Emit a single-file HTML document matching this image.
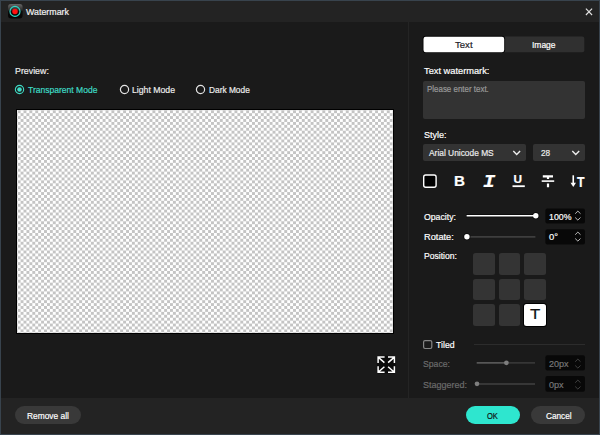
<!DOCTYPE html>
<html><head><meta charset="utf-8"><title>Watermark</title>
<style>
*{box-sizing:border-box;margin:0;padding:0}
html,body{width:600px;height:435px;overflow:hidden;background:#1a1a1a}
body{font-family:"Liberation Sans",sans-serif;font-size:10px;color:#ececec;position:relative}
.a{position:absolute}
.t{position:absolute;white-space:nowrap;line-height:12px;height:12px;transform-origin:0 0;-webkit-text-stroke:0.2px currentColor}
#win{left:0;top:0;width:600px;height:435px;border:1px solid #38434d;background:#1a1a1a}
#title{left:1px;top:1px;width:598px;height:21px;background:#232323}
#foot{left:1px;top:398px;width:598px;height:36px;background:#232323}
#vdiv{left:408px;top:22px;width:1px;height:376px;background:#242424}
.btn{position:absolute;top:406.3px;height:18.2px;border-radius:9.1px;background:#393939}
.box{position:absolute;background:#333;border-radius:2px}
.vb{position:absolute;background:#0b0b0b;border-radius:2px;left:545.5px;width:39.5px;height:15px}
.cell{position:absolute;width:21.7px;height:21.7px;background:#343434;border-radius:2.5px}
</style></head><body>
<div id="win" class="a"></div>
<div id="title" class="a"></div>
<div id="foot" class="a"></div>
<div id="vdiv" class="a"></div>

<!-- title icon + close -->
<svg class="a" style="left:8px;top:4px" width="15" height="15" viewBox="0 0 15 15">
<defs><linearGradient id="g" x1="0" y1="0" x2="0" y2="1"><stop offset="0" stop-color="#686868"/><stop offset="0.42" stop-color="#2c2c2c"/><stop offset="0.5" stop-color="#0c0c0c"/><stop offset="1" stop-color="#050505"/></linearGradient></defs>
<rect x="0" y="0" width="14.6" height="14.4" rx="3" fill="url(#g)"/>
<circle cx="7" cy="7.4" r="5" fill="none" stroke="#2fd9c8" stroke-width="1.15"/>
<circle cx="7" cy="7.4" r="2.75" fill="#ff1010"/>
</svg>
<svg class="a" style="left:585px;top:7.6px" width="8" height="8" viewBox="0 0 8 8"><path d="M0.9 0.6L7.1 7M7.1 0.6L0.9 7" stroke="#e4e4e4" stroke-width="1.1" fill="none"/></svg>

<!-- radios -->
<svg class="a" style="left:13.85px;top:84.2px" width="11" height="11" viewBox="0 0 11 11"><circle cx="5.5" cy="5.5" r="4.15" fill="none" stroke="#3fdcc6" stroke-width="1.1"/><circle cx="5.5" cy="5.5" r="2.3" fill="#3fdcc6"/></svg>
<svg class="a" style="left:118.6px;top:84.25px" width="11" height="11" viewBox="0 0 11 11"><circle cx="5.5" cy="5.5" r="4.1" fill="none" stroke="#e4e4e4" stroke-width="1.2"/></svg>
<svg class="a" style="left:195.4px;top:84.25px" width="11" height="11" viewBox="0 0 11 11"><circle cx="5.5" cy="5.5" r="4.1" fill="none" stroke="#e4e4e4" stroke-width="1.2"/></svg>

<!-- preview -->
<div class="a" style="left:16px;top:109px;width:378px;height:224.6px;background:#000"></div>
<div class="a" style="left:17px;top:110px;width:376px;height:222.6px;background:#fff repeating-conic-gradient(#c4c4c4 0 25%,#ffffff 0 50%) 0.67px 3.2px/5.871px 5.852px"></div>

<svg class="a" style="left:374px;top:353px" width="24" height="23" viewBox="374 353 24 23" fill="none" stroke="#fff" stroke-width="1.5">
<rect x="376.8" y="355.8" width="18.8" height="17.6" rx="1.5" fill="#000" fill-opacity="0.55" stroke="none"/>
<path d="M378.1 363V357.1H384.6M378.1 357.1L384.4 362.6M388 357.1H394.4V363M394.4 357.1L388.1 362.6M378.1 366.3V372.2H384.6M378.1 372.2L384.4 366.7M394.4 366.3V372.2H388M394.4 372.2L388.1 366.7"/></svg>

<div class="btn" style="left:15px;width:66.3px"></div>
<div class="btn" style="left:465.5px;width:54.5px;background:#2ee6cf"></div>
<div class="btn" style="left:531.3px;width:53.7px"></div>

<!-- right panel -->
<svg class="a" style="left:420px;top:33px" width="170" height="24" viewBox="420 33 170 24"><rect x="423" y="36.4" width="161.3" height="15.9" rx="2" fill="#303030"/><rect x="422.6" y="35.8" width="82.5" height="17.3" rx="3" fill="#050505"/><rect x="423.5" y="36.7" width="80.7" height="15.6" rx="2.2" fill="#fff"/></svg>
<div class="box" style="left:423px;top:81px;width:162px;height:38px"></div>
<div class="box" style="left:423px;top:144.3px;width:102.9px;height:17px"></div>
<svg class="a" style="left:512px;top:149px" width="10" height="8" viewBox="512 149 10 8"><path d="M513.3 151L516.7 154.4L520.1 151" stroke="#eee" stroke-width="1.4" fill="none"/></svg>
<div class="box" style="left:533.3px;top:144.3px;width:51.7px;height:17px"></div>
<svg class="a" style="left:571px;top:149px" width="10" height="8" viewBox="571 149 10 8"><path d="M572.3 151L575.75 154.4L579.2 151" stroke="#eee" stroke-width="1.4" fill="none"/></svg>

<!-- style icons -->
<svg class="a" style="left:420px;top:172px" width="170" height="20" viewBox="420 172 170 20" fill="none" stroke="#fff">
<rect x="423.7" y="175" width="12.4" height="12.2" rx="2" stroke-width="1.4" fill="#000"/>
<path d="M512.5 186.2H524.8" stroke-width="1.8"/>
<path d="M542.8 176.4H553M548 176.4V179M548 183.5V187.3" stroke-width="2.2"/>
<path d="M541.7 181.1H554.2" stroke-width="1.6"/>
<path d="M573.25 175.3V185" stroke-width="1.6"/><path d="M570.5 182.8H576L573.25 186.9Z" fill="#fff" stroke="none"/>
</svg>
<div class="t" style="left:453.9px;top:172.5px;font-size:15.2px;font-weight:bold;color:#fff;line-height:16px;height:16px">B</div>
<div class="t" style="left:483.2px;top:175.3px;font-size:18.6px;font-weight:bold;font-style:italic;color:#fff;line-height:16px;height:16px;font-family:'Liberation Mono',monospace;transform:scaleX(1.1)">I</div>
<div class="t" style="left:513.6px;top:172.1px;font-size:11.8px;font-weight:bold;color:#fff;line-height:14px;height:14px">U</div>
<div class="t" style="left:577px;top:172.8px;font-size:15.4px;font-weight:bold;color:#fff;line-height:18px;height:18px;transform:scaleX(0.8)">T</div>

<svg class="a" style="left:540px;top:200px" width="50" height="200" viewBox="540 200 50 200"><g fill="#080808">
<rect x="545.4" y="208.4" width="39.6" height="15" rx="2"/><rect x="545.4" y="229.3" width="39.6" height="15.1" rx="2"/>
<rect x="545.4" y="355.3" width="39.6" height="15.3" rx="2"/><rect x="545.4" y="376" width="39.6" height="15.7" rx="2"/></g></svg>
<svg class="a" style="left:460px;top:205px" width="82" height="190" viewBox="460 205 82 190" fill="none">
<path d="M466 215.75H536" stroke="#0a0a0a" stroke-width="3.2"/><circle cx="535.8" cy="215.8" r="3.5" fill="#0a0a0a"/><path d="M466.6 215.75H536" stroke="#fff" stroke-width="1.7"/><circle cx="535.8" cy="215.8" r="2.7" fill="#fff"/>
<path d="M467 236.8H535.4" stroke="#3e3e3e" stroke-width="1.7"/><circle cx="466.9" cy="236.7" r="3.5" fill="#0a0a0a"/><circle cx="466.9" cy="236.7" r="2.7" fill="#fff"/>
<path d="M476.7 362.9H506.4" stroke="#6c6c6c" stroke-width="1.3"/><path d="M506.4 362.9H535" stroke="#404040" stroke-width="1.3"/><circle cx="506.4" cy="362.8" r="2.35" fill="#7e7e7e"/>
<path d="M476.7 384H535" stroke="#424242" stroke-width="1.4"/><circle cx="477" cy="383.8" r="2.35" fill="#7e7e7e"/>
</svg>
<!-- opacity -->
<svg class="a" style="left:574.4px;top:210.4px" width="8" height="11" viewBox="0 0 8 11"><path d="M1.2 3.7L3.85 1.1L6.5 3.7M1.2 7.5L3.85 10.1L6.5 7.5" stroke="#d0d0d0" stroke-width="0.9" fill="none"/></svg>

<!-- rotate -->
<svg class="a" style="left:574.4px;top:231.3px" width="8" height="11" viewBox="0 0 8 11"><path d="M1.2 3.7L3.85 1.1L6.5 3.7M1.2 7.5L3.85 10.1L6.5 7.5" stroke="#d0d0d0" stroke-width="0.9" fill="none"/></svg>

<!-- position grid -->
<div class="cell" style="left:473.3px;top:253.3px"></div><div class="cell" style="left:498.65px;top:253.3px"></div><div class="cell" style="left:524px;top:253.3px"></div>
<div class="cell" style="left:473.3px;top:278.65px"></div><div class="cell" style="left:498.65px;top:278.65px"></div><div class="cell" style="left:524px;top:278.65px"></div>
<div class="cell" style="left:473.3px;top:304px"></div><div class="cell" style="left:498.65px;top:304px"></div>
<div class="cell" style="left:524px;top:304px;background:#fff;box-shadow:0 0 0 1px #000"></div>
<div class="t" style="left:529.6px;top:306.3px;color:#111;font-size:14px;line-height:16px;height:16px;transform:scaleX(1.2)">T</div>

<!-- tiled -->
<svg class="a" style="left:421px;top:338px" width="14" height="14" viewBox="421 338 14 14"><rect x="423.6" y="340.6" width="8.2" height="7.9" rx="1.4" fill="none" stroke="#858585" stroke-width="1.2"/></svg>
<div class="a" style="left:474px;top:344px;width:111px;height:1px;background:#2c2c2c"></div>

<svg class="a" style="left:574.4px;top:357.6px" width="8" height="11" viewBox="0 0 8 11"><path d="M1.2 3.7L3.85 1.1L6.5 3.7M1.2 7.5L3.85 10.1L6.5 7.5" stroke="#484848" stroke-width="0.9" fill="none"/></svg>

<svg class="a" style="left:574.4px;top:378.6px" width="8" height="11" viewBox="0 0 8 11"><path d="M1.2 3.7L3.85 1.1L6.5 3.7M1.2 7.5L3.85 10.1L6.5 7.5" stroke="#484848" stroke-width="0.9" fill="none"/></svg>

<div class="t" style="left:25.70px;top:5.61px;color:#f2f2f2;font-size:9.8px;transform:translateY(0.00px) scaleX(0.903)">Watermark</div>
<div class="t" style="left:15.20px;top:64.61px;color:#ececec;font-size:9.8px;transform:translateY(0.00px) scaleX(0.901)">Preview:</div>
<div class="t" style="left:28.40px;top:83.61px;color:#3fdcc6;font-size:9.8px;transform:translateY(0.30px) scaleX(0.872)">Transparent Mode</div>
<div class="t" style="left:132.00px;top:83.61px;color:#ececec;font-size:9.8px;transform:translateY(0.30px) scaleX(0.887)">Light Mode</div>
<div class="t" style="left:208.75px;top:83.61px;color:#ececec;font-size:9.8px;transform:translateY(0.30px) scaleX(0.851)">Dark Mode</div>
<div class="t" style="left:455.00px;top:38.61px;color:#1c2028;font-size:9.8px;transform:translateY(0.00px) scaleX(0.976)">Text</div>
<div class="t" style="left:532.00px;top:38.61px;color:#fff;font-size:9.8px;transform:translateY(0.00px) scaleX(0.864)">Image</div>
<div class="t" style="left:424.30px;top:64.61px;color:#fff;font-size:9.8px;transform:translateY(0.40px) scaleX(0.946)">Text watermark:</div>
<div class="t" style="left:426.60px;top:81.96px;color:#9a9a9a;font-size:8.8px;transform:translateY(0.50px) scaleX(0.903)">Please enter text.</div>
<div class="t" style="left:423.70px;top:127.61px;color:#fff;font-size:9.8px;transform:translateY(0.60px) scaleX(0.921)">Style:</div>
<div class="t" style="left:429.40px;top:146.61px;color:#ececec;font-size:9.8px;transform:translateY(0.00px) scaleX(0.855)">Arial Unicode MS</div>
<div class="t" style="left:541.00px;top:146.61px;color:#ececec;font-size:9.8px;transform:translateY(0.00px) scaleX(0.839)">28</div>
<div class="t" style="left:423.70px;top:209.61px;color:#fff;font-size:9.8px;transform:translateY(0.75px) scaleX(0.889)">Opacity:</div>
<div class="t" style="left:549.30px;top:209.61px;color:#fff;font-size:9.8px;transform:translateY(0.75px) scaleX(0.896)">100%</div>
<div class="t" style="left:423.70px;top:230.61px;color:#fff;font-size:9.8px;transform:translateY(0.20px) scaleX(0.943)">Rotate:</div>
<div class="t" style="left:549.30px;top:230.61px;color:#fff;font-size:9.8px;transform:translateY(0.20px) scaleX(0.963)">0°</div>
<div class="t" style="left:423.70px;top:248.61px;color:#fff;font-size:9.8px;transform:translateY(0.50px) scaleX(0.876)">Position:</div>
<div class="t" style="left:436.00px;top:338.61px;color:#fff;font-size:9.8px;transform:translateY(0.00px) scaleX(0.891)">Tiled</div>
<div class="t" style="left:423.20px;top:356.61px;color:#6c6c6c;font-size:9.8px;transform:translateY(0.60px) scaleX(0.883)">Space:</div>
<div class="t" style="left:549.30px;top:356.61px;color:#777;font-size:9.8px;transform:translateY(0.60px) scaleX(0.923)">20px</div>
<div class="t" style="left:423.20px;top:377.61px;color:#6c6c6c;font-size:9.8px;transform:translateY(0.60px) scaleX(0.919)">Staggered:</div>
<div class="t" style="left:549.30px;top:377.61px;color:#777;font-size:9.8px;transform:translateY(0.60px) scaleX(0.925)">0px</div>
<div class="t" style="left:27.00px;top:409.61px;color:#fff;font-size:9.8px;transform:translateY(0.30px) scaleX(0.855)">Remove all</div>
<div class="t" style="left:486.75px;top:408.61px;color:#111;font-size:9.8px;transform:translateY(0.90px) scaleX(0.769)">OK</div>
<div class="t" style="left:545.75px;top:409.61px;color:#fff;font-size:9.8px;transform:translateY(0.30px) scaleX(0.841)">Cancel</div>
</body></html>
